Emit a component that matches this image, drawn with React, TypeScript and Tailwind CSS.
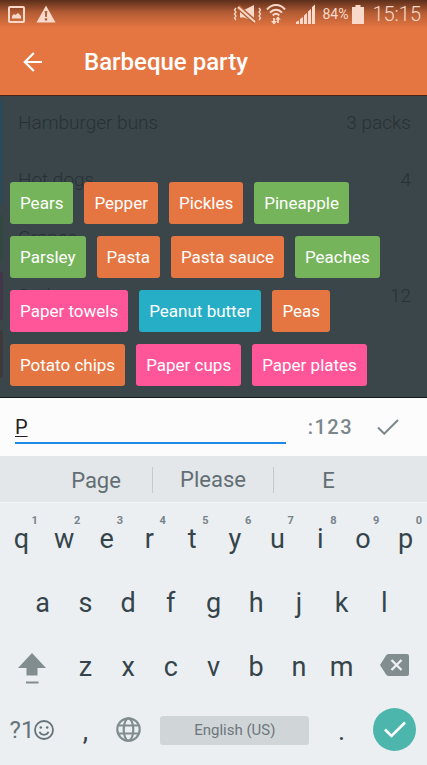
import React from "react";

type Tone = "green" | "orange" | "pink" | "blue";

const tones: Record<Tone, string> = {
  green: "bg-[#75b45a]",
  orange: "bg-[#e57642]",
  pink: "bg-[#ff5599]",
  blue: "bg-[#26aec6]",
};

const chips: { label: string; tone: Tone }[] = [
  { label: "Pears", tone: "green" },
  { label: "Pepper", tone: "orange" },
  { label: "Pickles", tone: "orange" },
  { label: "Pineapple", tone: "green" },
  { label: "Parsley", tone: "green" },
  { label: "Pasta", tone: "orange" },
  { label: "Pasta sauce", tone: "orange" },
  { label: "Peaches", tone: "green" },
  { label: "Paper towels", tone: "pink" },
  { label: "Peanut butter", tone: "blue" },
  { label: "Peas", tone: "orange" },
  { label: "Potato chips", tone: "orange" },
  { label: "Paper cups", tone: "pink" },
  { label: "Paper plates", tone: "pink" },
];

const groups: { bar: string; items: { name: string; amount: string }[] }[] = [
  {
    bar: "bg-[#294a56]",
    items: [
      { name: "Hamburger buns", amount: "3 packs" },
      { name: "Hot dogs", amount: "4" },
    ],
  },
  { bar: "bg-[#33493f]", items: [{ name: "Grapes", amount: "" }] },
  { bar: "bg-[#433648]", items: [{ name: "Soda", amount: "12" }] },
  { bar: "bg-[#3e3a3a]", items: [{ name: "", amount: "" }] },
];

function StatusBar() {
  return (
    <div className="flex h-7 items-center bg-linear-to-b from-[#5c2f1b] via-[#b45c34] via-45% to-[#e57642] pr-1.5 pl-2 text-[#f8d9ca]">
      <svg className="h-[17px] w-[17px]" viewBox="0 0 17 17" fill="none">
        <rect x="1" y="1" width="15" height="15" rx="1" stroke="currentColor" strokeWidth="2" />
        <path d="M4 12.5V10l2-2 1.500 1L10 7l3 3v2.500z" fill="currentColor" />
      </svg>
      <svg className="ml-[11px] h-[18px] w-5" viewBox="0 0 20 18">
        <path d="M10 0.500 19.500 17.500H0.500z" fill="currentColor" />
        <path d="M8.700 6h2.600l-.5 6H9.200zM8.800 13.300h2.400v2.200H8.800z" fill="#b2613d" />
      </svg>
      <div className="ml-auto flex items-center">
        <svg className="h-5 w-[29px]" viewBox="0 0 29 20" fill="none" stroke="currentColor">
          <path d="M3 4 1.500 6 3 8l-1.500 2L3 12l-1.500 2L3 16M26 4l1.500 2L26 8l1.500 2-1.500 2 1.500 2-1.500 2" strokeWidth="1.300" />
          <path d="M7 6h4l10-5v16.500L11 13.500H7z" fill="currentColor" stroke="none" />
          <path d="M5 3 22 18" stroke="#b86037" strokeWidth="5" />
          <path d="M5 3 22 18" strokeWidth="2" />
        </svg>
        <svg className="ml-1 h-[22px] w-5" viewBox="0 0 20 22" fill="none" stroke="currentColor">
          <path d="M1 6.500C6 0.500 14 0.500 19 6.500M4 9.700c3.500-4 8.500-4 12 0M6.800 12.500c2-2.300 4.400-2.300 6.400 0" strokeWidth="2" />
          <path d="M8 21v-6M12 14v6" strokeWidth="1.800" />
          <path d="M5 18h6l-3 3.500zM9.200 16.800h5.600L12 13.500z" fill="currentColor" stroke="none" />
        </svg>
        <svg className="ml-2.5 h-5 w-[19px]" viewBox="0 0 19 20" fill="currentColor">
          <path d="M0 20v-2l3-1.500V20zM4 20v-5l3-2v7zM8 20v-8.500l3-2.500v11zM12 20V7.500l3-2.500v15zM16 20V3l3-2.500V20z" />
        </svg>
        <span className="ml-[7px] text-[14px] leading-5">84%</span>
        <svg className="ml-1 h-[19px] w-3" viewBox="0 0 12 19" fill="currentColor">
          <path d="M3.500 0h5v2H12v17H0V2h3.500z" />
        </svg>
        <span className="ml-2 text-[20px] leading-6 font-light">15:15</span>
      </div>
    </div>
  );
}

function AppBar() {
  return (
    <div className="flex h-[67px] items-center bg-[#e57642] px-5 text-white">
      <button type="button" aria-label="Back" className="flex size-6 items-center justify-center">
        <svg className="h-5 w-[19px]" viewBox="0 0 19 20" fill="none" stroke="currentColor" strokeWidth="2.200">
          <path d="M19 10H2M10.800 1 1.800 10l9 9" />
        </svg>
      </button>
      <h1 className="ml-10 text-2xl font-medium">Barbeque party</h1>
    </div>
  );
}

function ShoppingList() {
  return (
    <ul className="flex flex-col gap-2.5 pt-[3px] text-[19px] font-light text-[#273135]">
      {groups.map((group, i) => (
        <li key={i} className="flex">
          <span className={"w-[3px] rounded-r-sm " + group.bar} />
          <ul className="flex flex-1 flex-col gap-[9px] pr-4 pl-[15px]">
            {group.items.map((item, j) => (
              <li key={j} className="flex h-12 items-center justify-between">
                <span>{item.name}</span>
                <span>{item.amount}</span>
              </li>
            ))}
          </ul>
        </li>
      ))}
    </ul>
  );
}

function Key({ label, hint }: { label: string; hint?: string }) {
  return (
    <button type="button" className="relative col-span-2 flex items-center justify-center text-[27px] leading-8">
      {label}
      {hint && (
        <span className="absolute top-1.5 right-[5px] text-[11px] leading-4 font-bold text-[#77838a]">{hint}</span>
      )}
    </button>
  );
}

function Keyboard() {
  return (
    <div className="grid auto-rows-[64px] grid-cols-20 border-t border-[#f3f6f8] bg-[#ebeff2] pt-1 pb-0.5 text-[#35444b]">
      {"qwertyuiop".split("").map((c, i) => (
        <Key key={c} label={c} hint={String((i + 1) % 10)} />
      ))}
      <span />
      {"asdfghjkl".split("").map((c) => (
        <Key key={c} label={c} />
      ))}
      <span />
      <button type="button" aria-label="Shift" className="col-span-3 flex items-center justify-center text-[#828d90]">
        <svg className="mt-1 h-8 w-7" viewBox="0 0 28 32" fill="currentColor">
          <path d="M14 0 28 15h-8.500v7.500h-11V15H0zM8 28.500h12.500v2H8z" />
        </svg>
      </button>
      {"zxcvbnm".split("").map((c) => (
        <Key key={c} label={c} />
      ))}
      <button type="button" aria-label="Delete" className="col-span-3 flex items-center justify-center pb-1 text-[#828d90]">
        <svg className="h-[22px] w-[29px]" viewBox="0 0 29 22">
          <path d="M8.500 0H27a2 2 0 0 1 2 2v18a2 2 0 0 1-2 2H8.500a3 3 0 0 1-2.500-1.500L0 11 6 1.500A3 3 0 0 1 8.500 0z" fill="currentColor" />
          <path d="m11.500 6 10 10M21.500 6l-10 10" stroke="#ebeff2" strokeWidth="2.400" />
        </svg>
      </button>
      <button type="button" className="col-span-3 flex items-center justify-center pb-0.5 text-2xl text-[#66737a]">
        ?1
        <svg className="size-5" viewBox="0 0 20 20" fill="none" stroke="currentColor" strokeWidth="1.800">
          <circle cx="10" cy="10" r="9" />
          <path d="M5.500 11.800c1.500 4 7.500 4 9 0" />
          <circle cx="6.800" cy="7.500" r="1.300" fill="currentColor" stroke="none" />
          <circle cx="13.200" cy="7.500" r="1.300" fill="currentColor" stroke="none" />
        </svg>
      </button>
      <Key label="," />
      <button type="button" aria-label="Language" className="col-span-2 flex items-center justify-center pb-1 text-[#828d90]">
        <svg className="size-[25px]" viewBox="0 0 25 25" fill="none" stroke="currentColor" strokeWidth="2.200">
          <circle cx="12.500" cy="12.500" r="11.200" />
          <ellipse cx="12.500" cy="12.500" rx="4.800" ry="11.200" />
          <path d="M2.500 8.500h20M2.500 16.500h20" />
        </svg>
      </button>
      <button type="button" className="col-span-8 mx-[11px] mb-0.5 h-[29px] self-center rounded-[3px] bg-[#d0d5d8] text-[15px] text-[#6d777b]">
        English (US)
      </button>
      <Key label="." />
      <button type="button" aria-label="Enter" className="col-span-3 mb-[3px] flex size-[43px] items-center justify-center self-center justify-self-center rounded-full bg-[#4db6ac] text-white">
        <svg className="h-[17px] w-[22px]" viewBox="0 0 22 17" fill="none" stroke="currentColor" strokeWidth="2.600">
          <path d="m1 8.500 6.500 6.500L21 1.500" />
        </svg>
      </button>
    </div>
  );
}

export default function App() {
  return (
    <div className="flex min-h-screen flex-col font-['Roboto',sans-serif]">
      <header>
        <StatusBar />
        <AppBar />
      </header>
      <main className="relative flex-1 overflow-hidden border-t border-b border-t-[#4b2514] border-b-[#14191b] bg-[#3b464a]">
        <ShoppingList />
        <div className="absolute inset-x-0 bottom-0 flex flex-wrap gap-x-[11px] gap-y-3 px-2.5 pb-[11px]">
          {chips.map((chip) => (
            <button
              key={chip.label}
              type="button"
              className={"h-[42px] rounded-[3px] px-2.5 pt-0.5 text-[17px] text-white " + tones[chip.tone]}
            >
              {chip.label}
            </button>
          ))}
        </div>
      </main>
      <form className="flex h-[58px] items-center bg-[#fcfcfc] pr-7 pl-[15px] text-[#7b878b]">
        <input
          type="text"
          aria-label="Add item"
          defaultValue="P"
          className="h-[34px] min-w-0 flex-1 border-b-2 border-[#1e88e5] pt-0.5 text-xl text-[#222] underline decoration-1 underline-offset-2 outline-none"
        />
        <button type="button" className="ml-[22px] text-xl font-medium tracking-[1.5px]">
          :123
        </button>
        <button type="button" aria-label="Add" className="ml-6">
          <svg className="h-4 w-[22px]" viewBox="0 0 22 16" fill="none" stroke="currentColor" strokeWidth="2">
            <path d="m1 8.500 6.200 6.200L21 1" />
          </svg>
        </button>
      </form>
      <div className="grid h-[46px] grid-cols-[112fr_122fr_109fr] items-center bg-[#e3e7ea] pt-0.5 pr-11 pl-10 text-[22px] text-[#626e73]">
        <button type="button">Page</button>
        <button type="button" className="h-[26px] border-x border-[#c3c9cc] leading-[26px]">
          Please
        </button>
        <button type="button">E</button>
      </div>
      <Keyboard />
    </div>
  );
}
